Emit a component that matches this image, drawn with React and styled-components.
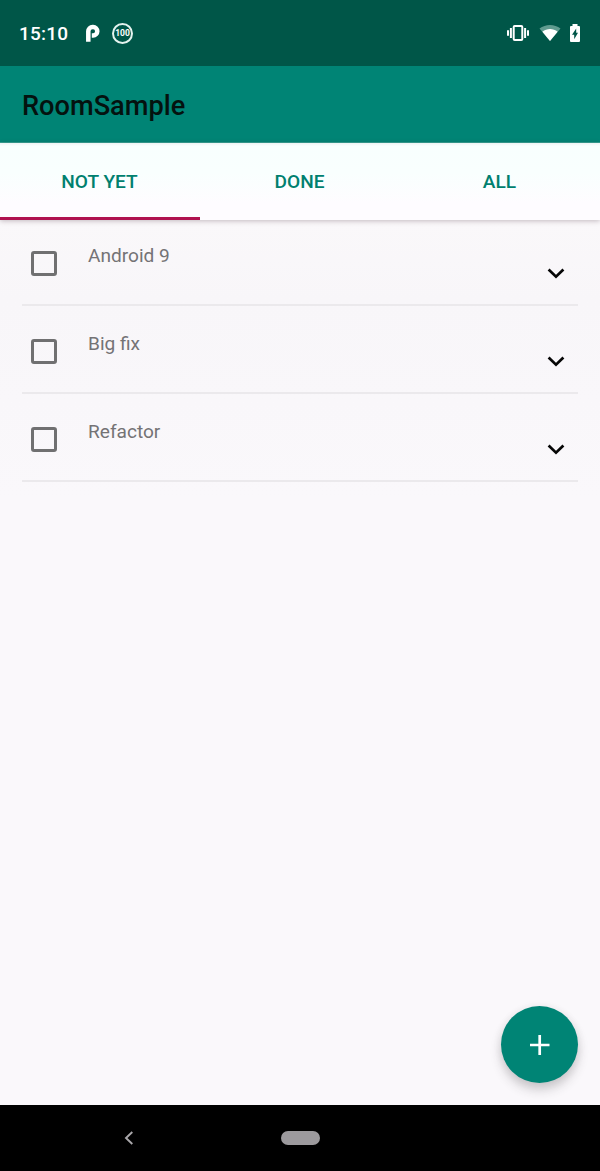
import React from 'react';
import styled, { createGlobalStyle } from 'styled-components';

const GlobalStyle = createGlobalStyle`
  * { box-sizing: border-box; }
  body { margin: 0; background: #faf8fb; font-family: Roboto, "Liberation Sans", sans-serif; }
`;

const Screen = styled.div`
  display: flex;
  flex-direction: column;
  width: 600px;
  height: 1171px;
  overflow: hidden;
  background: #faf8fb;
`;

const StatusBar = styled.header`
  flex: none;
  display: flex;
  justify-content: space-between;
  height: 66px;
  padding: 0 19px 0 19px;
  background: #005648;
  color: #fff;
`;

const StatusGroup = styled.div`
  display: flex;
  align-items: center;
`;

const Time = styled.span`
  width: 64px;
  padding-top: 1px;
  font-size: 19px;
  font-weight: 500;
  line-height: 24px;
  letter-spacing: 0.2px;
  white-space: nowrap;
`;

const Battery = styled.span`
  display: flex;
  align-items: center;
  justify-content: center;
  width: 21px;
  height: 21px;
  margin-left: 10px;
  padding-top: 1px;
  border: 2px solid #e4f3ef;
  border-radius: 50%;
  font-size: 8.5px;
  font-weight: 700;
  line-height: 9px;
`;

const AppBar = styled.div`
  flex: none;
  display: flex;
  align-items: center;
  height: 77px;
  padding: 3px 22px 0;
  background: #008475;
  border-bottom: 1px solid #34a091;
`;

const Title = styled.h1`
  margin: 0;
  color: #04120f;
  font-size: 27.2px;
  font-weight: 500;
  line-height: 34px;
`;

const Tabs = styled.nav`
  flex: none;
  display: flex;
  height: 77px;
  background: linear-gradient(#edf3f3 0, #f8fffe 3px, #f9fffe 30px, #fefcff 60px);
  box-shadow: 0 1px 5px rgba(50, 20, 40, 0.28);
  z-index: 1;
`;

const Tab = styled.button`
  flex: 1;
  display: flex;
  align-items: center;
  justify-content: center;
  padding: 4px 1px 0 0;
  border: 0;
  border-bottom: 3px solid ${(p) => (p.$active ? '#b0114f' : 'transparent')};
  background: none;
  color: #00806f;
  font: 500 19.1px/24px Roboto, "Liberation Sans", sans-serif;
`;

const List = styled.ul`
  flex: 1;
  margin: 0;
  padding: 0 22px;
  list-style: none;
  background: linear-gradient(#faf8fa 0, #f8f6f9 80px, #faf8fb 280px);
`;

const Item = styled.li`
  display: flex;
  height: 88px;
  padding: 0 12px 0 9px;
  border-bottom: 2px solid #ebe9ec;
  margin-top: ${(p) => (p.$first ? '-2px' : '0')};
`;

const Checkbox = styled.span`
  flex: none;
  width: 26px;
  height: 25px;
  margin-top: 33px;
  border: 3px solid #707071;
  border-radius: 3px;
`;

const Label = styled.span`
  flex: 1;
  margin: 26px 0 0 31px;
  color: #747375;
  font-size: 19.1px;
  line-height: 24px;
`;

const Expand = styled.span`
  flex: none;
  display: flex;
  margin-top: 50px;
  height: 12px;
`;

const NavBar = styled.footer`
  flex: none;
  display: grid;
  grid-template-columns: 1fr 40px 1fr;
  align-items: center;
  height: 66px;
  background: #000;
`;

const Back = styled.span`
  display: flex;
  padding-left: 122px;
`;

const Home = styled.span`
  width: 39px;
  height: 14px;
  margin-left: 0.5px;
  border-radius: 7px;
  background: #9c9a9d;
`;

const Fab = styled.button`
  position: absolute;
  left: 501px;
  top: 1006px;
  display: flex;
  align-items: center;
  justify-content: center;
  width: 77px;
  height: 77px;
  padding: 0;
  border: 0;
  border-radius: 50%;
  background: #008475;
  box-shadow: 0 7px 11px rgba(50, 45, 50, 0.22), 0 1px 9px rgba(50, 45, 50, 0.08);
`;

const tabs = ['NOT YET', 'DONE', 'ALL'];
const tasks = ['Android 9', 'Big fix', 'Refactor'];

const PieIcon = () => (
  <svg width="19" height="20" viewBox="0 0 19 20" fill="none">
    <path d="M5.300 18.700V8.300A4.300 4.300 0 0 1 9.600 4h.5a4.200 4.200 0 1 1 0 8.400H8.800" stroke="#fff" strokeWidth="4.500" />
  </svg>
);

const VibrateIcon = () => (
  <svg width="24" height="20" viewBox="0 0 24 20" fill="none" stroke="#fff">
    <rect x="7.700" y="2.900" width="8.600" height="14.200" rx="1" strokeWidth="2" />
    <path d="M4.900 5v10M19.100 5v10" strokeWidth="2" />
    <path d="M2 7.200v5.600M22 7.200v5.600" strokeWidth="2" />
  </svg>
);

const WifiIcon = () => (
  <svg width="22" height="18" viewBox="0 0 22 18">
    <path d="M0.500 4.500C6.500-0.300 15.500-0.300 21.500 4.500L11 17Z" fill="#5f9b8f" />
    <path d="M3.400 7.800C7.800 4.200 14.200 4.200 18.600 7.800L11 17Z" fill="#fff" />
  </svg>
);

const BatteryIcon = () => (
  <svg width="12" height="20" viewBox="0 0 12 20">
    <path d="M3.500 1h5v2H10a1 1 0 0 1 1 1v14a1 1 0 0 1-1 1H2a1 1 0 0 1-1-1V4a1 1 0 0 1 1-1h1.500Z" fill="#fff" />
    <path d="M7.200 5.500 3 11.800h2.200v4.500L9 9.800H7.200Z" fill="#005648" />
  </svg>
);

const StatusIcons = styled(StatusGroup)`
  gap: 8px;

  svg:first-child {
    margin-right: 1px;
  }
`;

const ChevronDown = () => (
  <svg width="20" height="12" viewBox="0 0 20 12" fill="none">
    <path d="m2.600 1.500 7.400 7.200 7.400-7.200" stroke="#060606" strokeWidth="2.700" />
  </svg>
);

export default function App() {
  return (
    <Screen>
      <GlobalStyle />
      <StatusBar>
        <StatusGroup>
          <Time>15:10</Time>
          <PieIcon />
          <Battery>100</Battery>
        </StatusGroup>
        <StatusIcons>
          <VibrateIcon />
          <WifiIcon />
          <BatteryIcon />
        </StatusIcons>
      </StatusBar>
      <AppBar>
        <Title>RoomSample</Title>
      </AppBar>
      <Tabs>
        {tabs.map((name, i) => (
          <Tab key={name} $active={i === 0}>{name}</Tab>
        ))}
      </Tabs>
      <List>
        {tasks.map((task, i) => (
          <Item key={task} $first={i === 0}>
            <Checkbox role="checkbox" aria-checked="false" />
            <Label>{task}</Label>
            <Expand><ChevronDown /></Expand>
          </Item>
        ))}
      </List>
      <NavBar>
        <Back>
          <svg width="14" height="16" viewBox="0 0 14 16" fill="none">
            <path d="M10.300 2 4 8l6.300 6" stroke="#a9a7aa" strokeWidth="1.900" />
          </svg>
        </Back>
        <Home />
      </NavBar>
      <Fab aria-label="Add">
        <svg width="20" height="20" viewBox="0 0 20 20">
          <path d="M9.700 0v20M0 10h19.500" stroke="#fff" strokeWidth="2.700" />
        </svg>
      </Fab>
    </Screen>
  );
}
